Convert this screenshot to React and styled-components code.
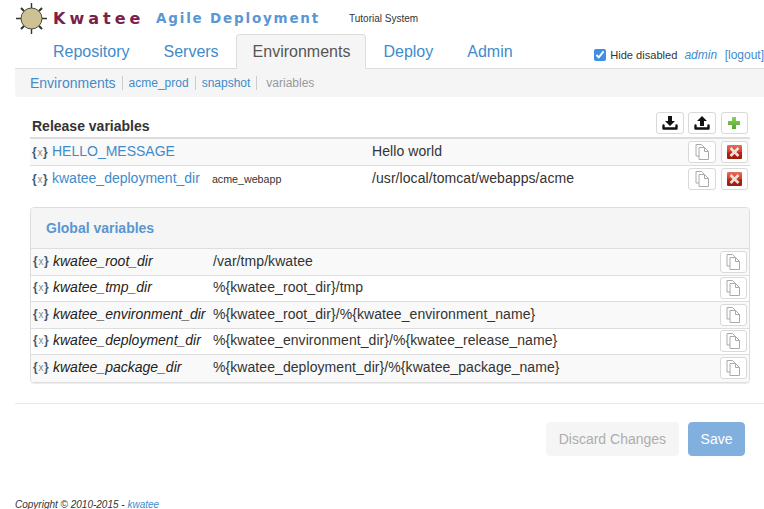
import React from 'react';
import styled, { createGlobalStyle } from 'styled-components';

const GlobalStyle = createGlobalStyle`
  html, body {
    margin: 0;
    padding: 0;
    background: #fff;
    overflow: hidden;
  }
  body {
    font-family: "Liberation Sans", Arial, sans-serif;
    font-size: 14px;
    color: #333;
  }
  a {
    color: #428bca;
    text-decoration: none;
  }
`;

const Page = styled.div`
  width: 764px;
  height: 509px;
  padding-left: 15px;
  box-sizing: border-box;
  overflow: hidden;
`;

const Brand = styled.header`
  display: flex;
  align-items: center;
  height: 34px;
  margin-top: 1px;
  margin-bottom: -1px;
`;

const KwateeName = styled.span`
  margin-left: 5px;
  font-family: "DejaVu Sans", sans-serif;
  font-size: 16px;
  font-weight: bold;
  letter-spacing: 4px;
  color: #7b2148;
  width: 103px;
  white-space: nowrap;
`;

const Tagline = styled.span`
  font-family: "DejaVu Sans", sans-serif;
  font-size: 13.5px;
  font-weight: bold;
  letter-spacing: 1.8px;
  color: #5a97d4;
  width: 193px;
  white-space: nowrap;
`;

const SystemName = styled.span`
  font-size: 10px;
  color: #333;
`;

const NavRow = styled.div`
  display: flex;
  align-items: flex-end;
  height: 35px;
  padding-left: 21px;
  box-sizing: border-box;
  border-bottom: 1px solid #ddd;
`;

const Tab = styled.a`
  margin-bottom: -1px;
  padding: 0 ${p => (p.$active ? 15 : 16)}px 0 16px;
  height: 35px;
  line-height: 34px;
  font-size: 16px;
  box-sizing: border-box;
  border: 1px solid ${p => (p.$active ? '#ddd' : 'transparent')};
  border-bottom-color: ${p => (p.$active ? '#f5f5f5' : 'transparent')};
  border-radius: 4px 4px 0 0;
  background: ${p => (p.$active ? '#f5f5f5' : 'transparent')};
  color: ${p => (p.$active ? '#555' : '#428bca')};
`;

const UserBox = styled.div`
  display: flex;
  align-items: center;
  margin-left: auto;
  height: 34px;
  font-size: 12px;
  white-space: nowrap;
  padding-top: 8px;
  box-sizing: border-box;
  color: #333;
`;

const HideCheck = styled.input`
  width: 12px;
  height: 12px;
  margin: 0 4px 0 0;
  accent-color: #3d8fe6;
`;

const HideLabel = styled.span`
  font-size: 11.1px;
`;

const UserLink = styled.a`
  margin-left: ${p => (p.$italic ? 7 : 7.5)}px;
  font-style: ${p => (p.$italic ? 'italic' : 'normal')};
`;

const Crumbs = styled.nav`
  display: flex;
  align-items: center;
  height: 28px;
  padding-left: 15px;
  background: #f5f5f5;
  border-radius: 0 0 0 4px;
`;

const Crumb = styled.a`
  font-size: ${p => (p.$large ? '14px' : '12px')};
  padding-right: 6px;
  margin-right: 6px;
  line-height: 14px;
  border-right: 1px solid #ccc;
`;

const CurrentCrumb = styled.span`
  font-size: 12px;
  margin-left: 3px;
  color: #999;
`;

const Main = styled.main`
  padding: 0 14px 0 15px;
`;

const ReleaseHead = styled.div`
  display: flex;
  align-items: center;
  justify-content: space-between;
  height: 26px;
  margin-top: 14px;
  padding-left: 2px;
  border-bottom: 2px solid #ddd;
`;

const ReleaseTitle = styled.h4`
  margin: 4px 0 0;
  font-size: 14px;
  font-weight: bold;
  color: #333;
`;

const Tools = styled.div`
  display: flex;
  gap: 4.6px;
  padding-right: 2px;
  margin-bottom: 2px;
`;

const IconButton = styled.button`
  display: flex;
  align-items: center;
  justify-content: center;
  width: 27.5px;
  height: 22px;
  padding: 0;
  margin: 0;
  background: #fff;
  border: 1px solid #d9d9d9;
  border-radius: 3px;
  flex: none;
`;

const Row = styled.div`
  display: flex;
  align-items: center;
  height: ${p => p.$h || 26.5}px;
  box-sizing: border-box;
  background: ${p => (p.$striped ? '#f9f9f9' : '#fff')};
  border-bottom: 1px solid ${p => (p.$last ? 'transparent' : '#ddd')};
  padding-left: 2px;
  padding-right: 2px;
`;

const VarIcon = styled.span`
  display: inline-block;
  width: 18px;
  margin-right: 2px;
  font-size: 12px;
  font-weight: bold;
  font-style: normal;
  letter-spacing: 0.7px;
  color: #3f5a70;
  text-align: left;
  white-space: nowrap;
`;

const VarMark = styled.span`
  font-weight: normal;
  font-size: 10px;
  color: #888;
`;

const ReleaseName = styled.div`
  display: flex;
  align-items: baseline;
  width: 340px;
  flex: none;
  white-space: nowrap;
  padding-bottom: 2px;
`;

const AppTag = styled.span`
  margin-left: 12px;
  font-size: 10.7px;
  color: #333;
`;

const Value = styled.div`
  flex: 1;
  white-space: nowrap;
  letter-spacing: 0.07px;
  color: #333;
  padding-bottom: 2px;
`;

const RowActions = styled.div`
  display: flex;
  gap: 4.6px;
`;

const Panel = styled.section`
  margin-top: 14px;
  border: 1px solid #ddd;
  border-radius: 4px;
  box-shadow: 0 1px 1px rgba(0, 0, 0, 0.08);
  overflow: hidden;
`;

const PanelHead = styled.div`
  display: flex;
  align-items: center;
  height: 40px;
  padding-left: 15px;
  background: #f5f5f5;
  border-bottom: 1px solid #ddd;
`;

const PanelTitle = styled.a`
  font-size: 14px;
  font-weight: bold;
  color: #5a96d0;
`;

const GlobalName = styled.div`
  display: flex;
  align-items: center;
  width: 180px;
  flex: none;
  font-style: italic;
  color: #222;
  white-space: nowrap;
  padding-bottom: 2px;
`;

const Rule = styled.hr`
  height: 0;
  margin: 20px 0 18px;
  border: 0;
  border-top: 1px solid #e8e8e8;
`;

const Actions = styled.div`
  display: flex;
  justify-content: flex-end;
  gap: 9px;
  padding-right: 19px;
`;

const ActionButton = styled.button`
  height: 34px;
  padding: 0 ${p => (p.$primary ? 11.5 : 12)}px;
  font-family: inherit;
  font-size: 14px;
  border: 1px solid ${p => (p.$primary ? '#82b0de' : '#f5f5f5')};
  border-radius: 4px;
  background: ${p => (p.$primary ? '#82b0de' : '#f5f5f5')};
  color: ${p => (p.$primary ? '#fff' : '#adadad')};
`;

const Footer = styled.footer`
  margin-top: 43px;
  font-size: 10px;
  font-style: italic;
  color: #333;
`;

function Logo() {
  return (
    <svg width="33" height="33" viewBox="0 0 33 33" style={{ flex: 'none' }}>
      <g stroke="#333" strokeWidth="1.4">
        <path d="M16.5 1v31M1 16.5h31" />
        <path d="M6 6l3 3M27 6l-3 3M6 27l3-3M27 27l-3-3" strokeWidth="2" />
      </g>
      <circle cx="16.5" cy="16.5" r="10.5" fill="#cdc196" stroke="#4a4a3a" strokeWidth="1" />
    </svg>
  );
}

function DownloadIcon() {
  return (
    <svg width="16" height="16" viewBox="0 0 16 16">
      <path d="M6 1h4v5h3l-5 5-5-5h3z" fill="#111" />
      <path d="M1.5 10.5v3h13v-3" fill="none" stroke="#111" strokeWidth="2.4" strokeLinecap="round" strokeLinejoin="round" />
    </svg>
  );
}

function UploadIcon() {
  return (
    <svg width="16" height="16" viewBox="0 0 16 16">
      <path d="M6 11h4V6h3L8 1 3 6h3z" fill="#111" />
      <path d="M1.5 10.5v3h13v-3" fill="none" stroke="#111" strokeWidth="2.4" strokeLinecap="round" strokeLinejoin="round" />
    </svg>
  );
}

function PlusIcon() {
  return (
    <svg width="14" height="14" viewBox="0 0 14 14">
      <defs>
        <linearGradient id="plusFill" x1="0" y1="0" x2="0" y2="1">
          <stop offset="0" stopColor="#8fd060" />
          <stop offset="1" stopColor="#4fa82e" />
        </linearGradient>
      </defs>
      <path d="M5 1h4v4h4v4H9v4H5V9H1V5h4z" fill="url(#plusFill)" />
    </svg>
  );
}

function CopyIcon() {
  return (
    <svg width="14" height="16" viewBox="0 0 14 16" fill="#fff" stroke="#aaa" strokeWidth="1">
      <path d="M1 .5h5.5l2.5 2.5v9H1z" />
      <path d="M4 3.5h5.5l4 4v8H4z" />
      <path d="M9.5 3.5v4h4" fill="none" />
    </svg>
  );
}

function DeleteIcon() {
  return (
    <svg width="15" height="14" viewBox="0 0 15 14">
      <defs>
        <linearGradient id="delFill" x1="0" y1="0" x2="0" y2="1">
          <stop offset="0" stopColor="#e4705c" />
          <stop offset="0.5" stopColor="#d23c2a" />
          <stop offset="0.55" stopColor="#b02616" />
          <stop offset="1" stopColor="#9c1c10" />
        </linearGradient>
      </defs>
      <rect width="15" height="14" rx="1" fill="url(#delFill)" />
      <path d="M3.5 3l8 8M11.5 3l-8 8" stroke="#f0e0d8" strokeWidth="2.6" />
    </svg>
  );
}

function VarGlyph() {
  return <VarIcon>{'{'}<VarMark>x</VarMark>{'}'}</VarIcon>;
}

const globals = [
  ['kwatee_root_dir', '/var/tmp/kwatee'],
  ['kwatee_tmp_dir', '%{kwatee_root_dir}/tmp'],
  ['kwatee_environment_dir', '%{kwatee_root_dir}/%{kwatee_environment_name}'],
  ['kwatee_deployment_dir', '%{kwatee_environment_dir}/%{kwatee_release_name}'],
  ['kwatee_package_dir', '%{kwatee_deployment_dir}/%{kwatee_package_name}'],
];

export default function App() {
  return (
    <Page>
      <GlobalStyle />
      <Brand>
        <Logo />
        <KwateeName>Kwatee</KwateeName>
        <Tagline>Agile Deployment</Tagline>
        <SystemName>Tutorial System</SystemName>
      </Brand>
      <NavRow>
        <Tab href="#">Repository</Tab>
        <Tab href="#">Servers</Tab>
        <Tab href="#" $active>Environments</Tab>
        <Tab href="#">Deploy</Tab>
        <Tab href="#">Admin</Tab>
        <UserBox>
          <HideCheck type="checkbox" defaultChecked />
          <HideLabel>Hide disabled</HideLabel>
          <UserLink href="#" $italic>admin</UserLink>
          <UserLink href="#">[logout]</UserLink>
        </UserBox>
      </NavRow>
      <Crumbs>
        <Crumb href="#" $large>Environments</Crumb>
        <Crumb href="#">acme_prod</Crumb>
        <Crumb href="#">snapshot</Crumb>
        <CurrentCrumb>variables</CurrentCrumb>
      </Crumbs>
      <Main>
        <ReleaseHead>
          <ReleaseTitle>Release variables</ReleaseTitle>
          <Tools>
            <IconButton><DownloadIcon /></IconButton>
            <IconButton><UploadIcon /></IconButton>
            <IconButton><PlusIcon /></IconButton>
          </Tools>
        </ReleaseHead>
        <Row $striped $h={27}>
          <ReleaseName><VarGlyph /><a href="#">HELLO_MESSAGE</a></ReleaseName>
          <Value>Hello world</Value>
          <RowActions>
            <IconButton><CopyIcon /></IconButton>
            <IconButton><DeleteIcon /></IconButton>
          </RowActions>
        </Row>
        <Row $last $h={27}>
          <ReleaseName>
            <VarGlyph /><a href="#">kwatee_deployment_dir</a>
            <AppTag>acme_webapp</AppTag>
          </ReleaseName>
          <Value>/usr/local/tomcat/webapps/acme</Value>
          <RowActions>
            <IconButton><CopyIcon /></IconButton>
            <IconButton><DeleteIcon /></IconButton>
          </RowActions>
        </Row>
        <Panel>
          <PanelHead><PanelTitle href="#">Global variables</PanelTitle></PanelHead>
          {globals.map(([name, value], i) => (
            <Row key={name} $striped={i % 2 === 0} $last={i === globals.length - 1}>
              <GlobalName><VarGlyph />{name}</GlobalName>
              <Value>{value}</Value>
              <IconButton><CopyIcon /></IconButton>
            </Row>
          ))}
        </Panel>
      </Main>
      <Rule />
      <Actions>
        <ActionButton>Discard Changes</ActionButton>
        <ActionButton $primary>Save</ActionButton>
      </Actions>
      <Footer>Copyright © 2010-2015 - <a href="#">kwatee</a></Footer>
    </Page>
  );
}
